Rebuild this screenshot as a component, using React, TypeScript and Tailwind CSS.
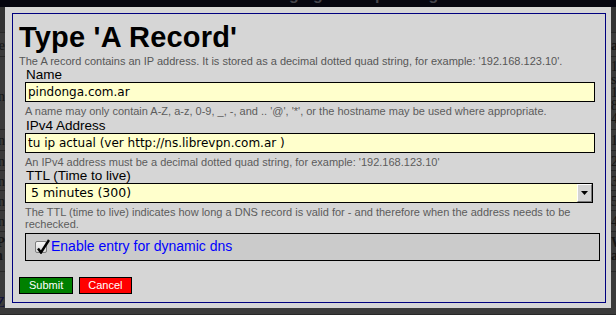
import React from "react";

function BgRow({
  h,
  left,
  right,
  cls = "",
}: {
  h: string;
  left?: React.ReactNode;
  right?: React.ReactNode;
  cls?: string;
}) {
  return (
    <div className={`flex justify-between border-b border-[#272727] ${h} ${cls}`}>
      <div className="w-[5px] overflow-hidden flex justify-end">
        <div className="whitespace-nowrap">{left}</div>
      </div>
      <div className="w-[5px] overflow-hidden">
        <div className="whitespace-nowrap">{right}</div>
      </div>
    </div>
  );
}

function Field({
  label,
  help,
  children,
  cls = "",
}: {
  label: string;
  help: React.ReactNode;
  children: React.ReactNode;
  cls?: string;
}) {
  return (
    <div className={cls}>
      <div className="pl-[1px] text-[13.5px] leading-[15px] text-black">{label}</div>
      {children}
      <div className="mt-[3px] text-[11px] leading-[12px] text-[#5c5c5c]">{help}</div>
    </div>
  );
}

export default function App() {
  return (
    <div className="relative w-[616px] h-[315px] overflow-hidden bg-[#3a3a3a] font-['Liberation_Sans',Arial,sans-serif]">
      {/* darkened page behind the dialog */}
      <div className="flex flex-col text-[14px] leading-[13px] text-[#161616] font-['Liberation_Serif',serif]">
        <div className="h-[7px] bg-[#05050f] overflow-hidden">
          <div className="pl-[248px] -mt-[14px] whitespace-nowrap font-['Liberation_Sans',Arial,sans-serif] text-[16px] leading-[18px] font-bold text-[#44444c]">
            Managing Zone: pindonga.com.ar
          </div>
        </div>
        <BgRow h="h-[26px]" cls="bg-[#333333]" />
        <BgRow h="h-[24px] pt-[6px]" left="Name" right={<b>a</b>} />
        <BgRow
          h="h-[73px] pt-[3px]"
          left={<div className="pt-[30px]">Domain</div>}
          right={
            <div>
              1<br />s<br />1<br />8<br />4
            </div>
          }
        />
        <BgRow h="h-[21px] pt-[4px]" left="In" right="1" />
        <BgRow h="h-[20px] pt-[4px]" left="In" right="2" />
        <BgRow h="h-[20px] pt-[4px]" left="In" right="3" />
        <BgRow h="h-[20px] pt-[4px]" left="In" right="5" />
        <BgRow h="h-[21px] pt-[4px] border-[#4a1818]" left="In" right="4" />
        <BgRow
          h="h-[40px] pt-[4px] border-[#4a1818]"
          left={
            <div className="font-bold">
              IP
              <br />
              in
            </div>
          }
          right={
            <div className="font-bold">
              W<br />a
            </div>
          }
        />
        <BgRow h="h-[43px] pt-[24px]" left={<span className="text-[#10103a]">Z</span>} />
      </div>

      {/* dialog */}
      <div className="absolute left-[5px] top-[7px] w-[606px] h-[301px] bg-[#d6d6d6] pt-[6px] pl-[7px]">
        <div className="w-[594px] h-[290px] border border-[#00007f] pl-[6px] pt-[7px]">
          <h1 className="text-[29px] leading-[32px] font-bold text-black tracking-[0.2px]">Type 'A Record'</h1>
          <p className="mt-[2px] text-[11px] leading-[12px] text-[#575757]">
            The A record contains an IP address. It is stored as a decimal dotted quad string, for example:
            '192.168.123.10'.
          </p>

          <div className="ml-[6px]">
            <Field
              label="Name"
              help={<>A name may only contain A-Z, a-z, 0-9, _, -, and .. '@', '*', or the hostname may be used where appropriate.</>}
            >
              <div className="w-[570px] h-[20px] border border-black bg-[#ffffcc] pl-[2px] flex items-center font-['DejaVu_Sans',sans-serif] text-[12px] leading-[14px] text-black">
                pindonga.com.ar
              </div>
            </Field>

            <Field
              cls="mt-[1px]"
              label="IPv4 Address"
              help="An IPv4 address must be a decimal dotted quad string, for example: '192.168.123.10'"
            >
              <div className="w-[570px] h-[20px] border border-black bg-[#ffffcc] pl-[2px] flex items-center font-['DejaVu_Sans',sans-serif] text-[12px] leading-[14px] text-black">
                tu ip actual (ver http://ns.librevpn.com.ar )
              </div>
            </Field>

            <Field
              label="TTL (Time to live)"
              help="The TTL (time to live) indicates how long a DNS record is valid for - and therefore when the address needs to be rechecked."
            >
              <div className="w-[568px] h-[20px] border border-black bg-[#ffffcc] flex items-stretch">
                <div className="flex-1 pl-[5px] flex items-center font-['DejaVu_Sans',sans-serif] text-[12.5px] leading-[14px] text-black">
                  5 minutes (300)
                </div>
                <div className="w-[15px] bg-[#d4d4d4] border-t border-l border-t-white border-l-white border-b border-r border-b-[#7a7a7a] border-r-[#7a7a7a] flex items-center justify-center">
                  <svg width="7" height="4" viewBox="0 0 7 4">
                    <path d="M0 0 H7 L3.5 4 Z" fill="#000" />
                  </svg>
                </div>
              </div>
            </Field>

            <div className="mt-[3px] w-[575px] h-[28px] border border-black bg-[#cbcbcb] pl-[9px] flex items-center">
              <span className="relative w-[12px] h-[12px] border border-[#7d7d7d] rounded-[2px] bg-gradient-to-b from-[#f6f6f6] to-[#d8d8d8] shrink-0">
                <svg className="absolute -top-[4px] left-[0px]" width="14" height="16" viewBox="0 0 14 16">
                  <path d="M2 10.5 L5 14.5 L13 2" stroke="#000" strokeWidth="2.4" fill="none" strokeLinejoin="miter" />
                </svg>
              </span>
              <span className="ml-[4px] -mt-[3px] text-[14px] leading-[16px] text-[#0000ff]">Enable entry for dynamic dns</span>
            </div>
          </div>

          <div className="mt-[16px] flex gap-[6px]">
            <button className="h-[17px] px-[9px] border border-black bg-[#008000] text-white text-[11px] leading-[15px]">
              Submit
            </button>
            <button className="h-[17px] px-[8px] border border-black bg-[#ff0000] text-white text-[11px] leading-[15px]">
              Cancel
            </button>
          </div>
        </div>
      </div>
    </div>
  );
}
